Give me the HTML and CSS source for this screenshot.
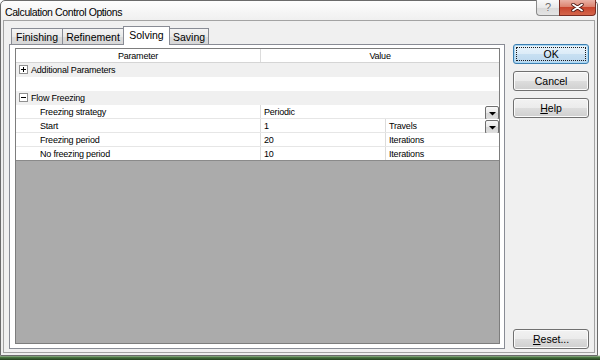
FILE: index.html
```html
<!DOCTYPE html>
<html lang="en">
<head>
    <meta charset="UTF-8">
    <title>Calculation Control Options</title>
    <link rel="stylesheet" href="styles.css">
</head>
<body>

    <div class="window">
        <div class="titlebar">
            <span class="title">Calculation Control Options</span>
            <div class="caption-buttons">
                <div class="cap-help">?</div>
                <div class="cap-close">
                    <svg width="13" height="9" viewBox="0 0 13 9">
                        <path d="M2 1.5L11 7.5M11 1.5L2 7.5" stroke="#4a1510" stroke-width="3.4" stroke-linecap="round"/>
                        <path d="M2 1.5L11 7.5M11 1.5L2 7.5" stroke="#fff" stroke-width="1.8" stroke-linecap="round"/>
                    </svg>
                </div>
            </div>
        </div>

        <div class="client">
            <div class="tabs-area">
                <div class="tabstrip">
                    <div class="tab">Finishing</div>
                    <div class="tab">Refinement</div>
                    <div class="tab active">Solving</div>
                    <div class="tab">Saving</div>
                </div>

                <div class="tabpanel">
                    <div class="grid">
                        <div class="grid-head">
                            <div class="col-param">Parameter</div>
                            <div class="col-value">Value</div>
                        </div>

                        <div class="row cat">
                            <svg class="expander" width="9" height="9" viewBox="0 0 9 9">
                                <rect x="0.5" y="0.5" width="8" height="8" fill="#fff" stroke="#8f8f8f"/>
                                <path d="M2 4.5H7M4.5 2V7" stroke="#000"/>
                            </svg>
                            <span class="cat-text">Additional Parameters</span>
                        </div>
                        <div class="row blank"></div>
                        <div class="row cat">
                            <svg class="expander" width="9" height="9" viewBox="0 0 9 9">
                                <rect x="0.5" y="0.5" width="8" height="8" fill="#fff" stroke="#8f8f8f"/>
                                <path d="M2 4.5H7" stroke="#000"/>
                            </svg>
                            <span class="cat-text">Flow Freezing</span>
                        </div>

                        <div class="row">
                            <div class="col-param">Freezing strategy</div>
                            <div class="col-value">
                                <span class="cell-text">Periodic</span>
                                <span class="drop"><svg width="7" height="4" viewBox="0 0 7 4"><path d="M0 0H7L3.5 3.5Z" fill="#000"/></svg></span>
                            </div>
                        </div>
                        <div class="row">
                            <div class="col-param">Start</div>
                            <div class="col-value split">
                                <div class="col-num">1</div>
                                <div class="col-unit">
                                    <span class="cell-text">Travels</span>
                                    <span class="drop"><svg width="7" height="4" viewBox="0 0 7 4"><path d="M0 0H7L3.5 3.5Z" fill="#000"/></svg></span>
                                </div>
                            </div>
                        </div>
                        <div class="row">
                            <div class="col-param">Freezing period</div>
                            <div class="col-value split">
                                <div class="col-num">20</div>
                                <div class="col-unit"><span class="cell-text">Iterations</span></div>
                            </div>
                        </div>
                        <div class="row">
                            <div class="col-param">No freezing period</div>
                            <div class="col-value split">
                                <div class="col-num">10</div>
                                <div class="col-unit"><span class="cell-text">Iterations</span></div>
                            </div>
                        </div>

                        <div class="grid-empty"></div>
                    </div>
                </div>
            </div>

            <div class="side-buttons">
                <div class="btn default"><span class="focus">OK</span></div>
                <div class="btn">Cancel</div>
                <div class="btn"><span><u>H</u>elp</span></div>
                <div class="btn reset"><span><u>R</u>eset...</span></div>
            </div>
        </div>
    </div>

</body>
</html>
```

FILE: styles.css
```css
* {
    box-sizing: border-box;
}

html, body {
    margin: 0;
    padding: 0;
}

body {
    width: 600px;
    height: 360px;
    overflow: hidden;
    font-family: "Liberation Sans", Arial, sans-serif;
    color: #000;
    background: linear-gradient(#ffffff 0, #ffffff 355px, #4f7d45 357px, #223f1e 360px);
}

.window {
    width: 598px;
    height: 356px;
    border: 1px solid #6a6a6a;
    border-radius: 5px 5px 0 0;
    background: linear-gradient(#fdfdfd, #efefef 20px, #eeeeee);
    padding: 0 2px 2px 2px;
    display: flex;
    flex-direction: column;
}

/* title bar */
.titlebar {
    height: 19px;
    display: flex;
    align-items: flex-start;
}

.title {
    font-size: 10.5px;
    letter-spacing: -0.4px;
    line-height: 12px;
    margin: 5px 0 0 2px;
    color: #000;
}

.caption-buttons {
    margin-left: auto;
    margin-top: -1px;
    margin-right: -1px;
    display: flex;
}

.cap-help {
    width: 23px;
    height: 16px;
    border: 1px solid #8a8a8a;
    border-top: none;
    border-right: none;
    border-radius: 0 0 0 4px;
    background: linear-gradient(#fafafa, #e9e9e9 50%, #d9d9d9 51%, #e4e4e4);
    font-size: 11px;
    line-height: 14px;
    text-align: center;
    color: #6a6a6a;
    text-shadow: 0 0 1px #fff;
}

.cap-close {
    width: 37px;
    height: 16px;
    border: 1px solid #7b2c22;
    border-top: none;
    border-radius: 0 0 4px 0;
    background: linear-gradient(#eab2a6, #dc8470 45%, #c8452e 50%, #d4664b);
    display: flex;
    align-items: center;
    justify-content: center;
}

/* client area */
.client {
    flex: 1;
    border: 1px solid #a3a3a3;
    background: #f0f0f0;
    display: flex;
    padding: 0 5px 3px 5px;
    gap: 8px;
}

.tabs-area {
    width: 497px;
    display: flex;
    flex-direction: column;
}

.tabstrip {
    height: 23px;
    display: flex;
    align-items: flex-end;
    padding-left: 2px;
}

.tab {
    height: 16px;
    padding: 0 4px;
    border: 1px solid #898c95;
    border-bottom: none;
    border-right: none;
    background: linear-gradient(#f4f4f4, #e9e9e9 50%, #dcdcdc 51%, #d8d8d8);
    font-size: 10.5px;
    line-height: 16px;
    display: flex;
    align-items: center;
    justify-content: center;
}

.tab:nth-child(1) { width: 51px; }
.tab:nth-child(2) { width: 61px; }
.tab:nth-child(3) { width: 47px; }
.tab:nth-child(4) { width: 39px; border-right: 1px solid #898c95; }

.tab.active {
    height: 19px;
    margin-bottom: -1px;
    border-right: 1px solid #898c95;
    background: #fff;
    position: relative;
    z-index: 1;
    padding-bottom: 3px;
}

.tab.active + .tab {
    border-left: none;
}

.tabpanel {
    flex: 1;
    border: 1px solid #898c95;
    background: #fff;
    padding: 3px 4px 4px 5px;
    display: flex;
}

/* property grid */
.grid {
    flex: 1;
    border: 1px solid #7d7d7d;
    background: #ababab;
    display: flex;
    flex-direction: column;
    font-size: 9px;
    letter-spacing: -0.2px;
}

.grid-head {
    height: 14px;
    display: flex;
    background: #fff;
    border-bottom: 1px solid #d5d5d5;
    line-height: 14px;
}

.grid-head .col-param,
.grid-head .col-value {
    text-align: center;
}

.col-param {
    width: 245px;
    height: 13px;
    border-right: 1px solid #dcdcdc;
    padding-left: 24px;
}

.grid-head .col-param {
    padding-left: 0;
}

.col-value {
    flex: 1;
    display: flex;
    justify-content: space-between;
    padding-left: 3px;
}

.grid-head .col-value {
    justify-content: center;
    padding-left: 0;
}

.row {
    height: 14px;
    display: flex;
    align-items: flex-start;
    line-height: 14px;
    background: #fff;
    border-bottom: 1px solid #e6e6e6;
}

.row.cat {
    background: #f0f0f0;
    border-bottom-color: #f0f0f0;
    align-items: center;
    gap: 3px;
    padding-left: 3px;
}

.cat-text {
    padding-top: 1px;
}

.row.blank {
    border-bottom-color: #fff;
}

.expander {
    display: block;
    flex: none;
}

.col-value.split {
    padding-left: 0;
}

.col-num {
    width: 125px;
    height: 13px;
    border-right: 1px solid #dcdcdc;
    padding-left: 3px;
}

.col-unit {
    flex: 1;
    display: flex;
    justify-content: space-between;
    padding-left: 3px;
}

.drop {
    width: 14px;
    height: 14px;
    margin-top: 1px;
    border: 1px solid #6f6f6f;
    border-radius: 2px;
    background: linear-gradient(#f8f8f8, #e8e8e8 50%, #d6d6d6 51%, #dedede);
    display: flex;
    align-items: center;
    justify-content: center;
    padding-top: 1px;
}

.drop svg {
    display: block;
}

.grid-empty {
    flex: 1;
    border-top: 1px solid #8a8a8a;
    margin-top: -1px;
}

/* dialog buttons */
.side-buttons {
    width: 76px;
    display: flex;
    flex-direction: column;
    gap: 7px;
    padding-top: 23px;
}

.btn {
    height: 20px;
    border: 1px solid #707070;
    border-radius: 3px;
    background: linear-gradient(#f2f2f2, #ebebeb 50%, #dddddd 51%, #cfcfcf);
    box-shadow: inset 0 0 0 1px #fbfbfb;
    font-size: 10.5px;
    display: flex;
    align-items: center;
    justify-content: center;
}

.btn.default {
    border-color: #3c7fb1;
    background: linear-gradient(#eaf4fb, #dcecf8 50%, #c8e0f2 51%, #bcd8ef);
    box-shadow: inset 0 0 0 1px #a9d7f3;
    align-items: stretch;
}

.btn .focus {
    flex: 1;
    margin: 2px;
    border: 1px dotted #1a1a1a;
    display: flex;
    align-items: center;
    justify-content: center;
}

.btn.reset {
    margin-top: auto;
}
```
